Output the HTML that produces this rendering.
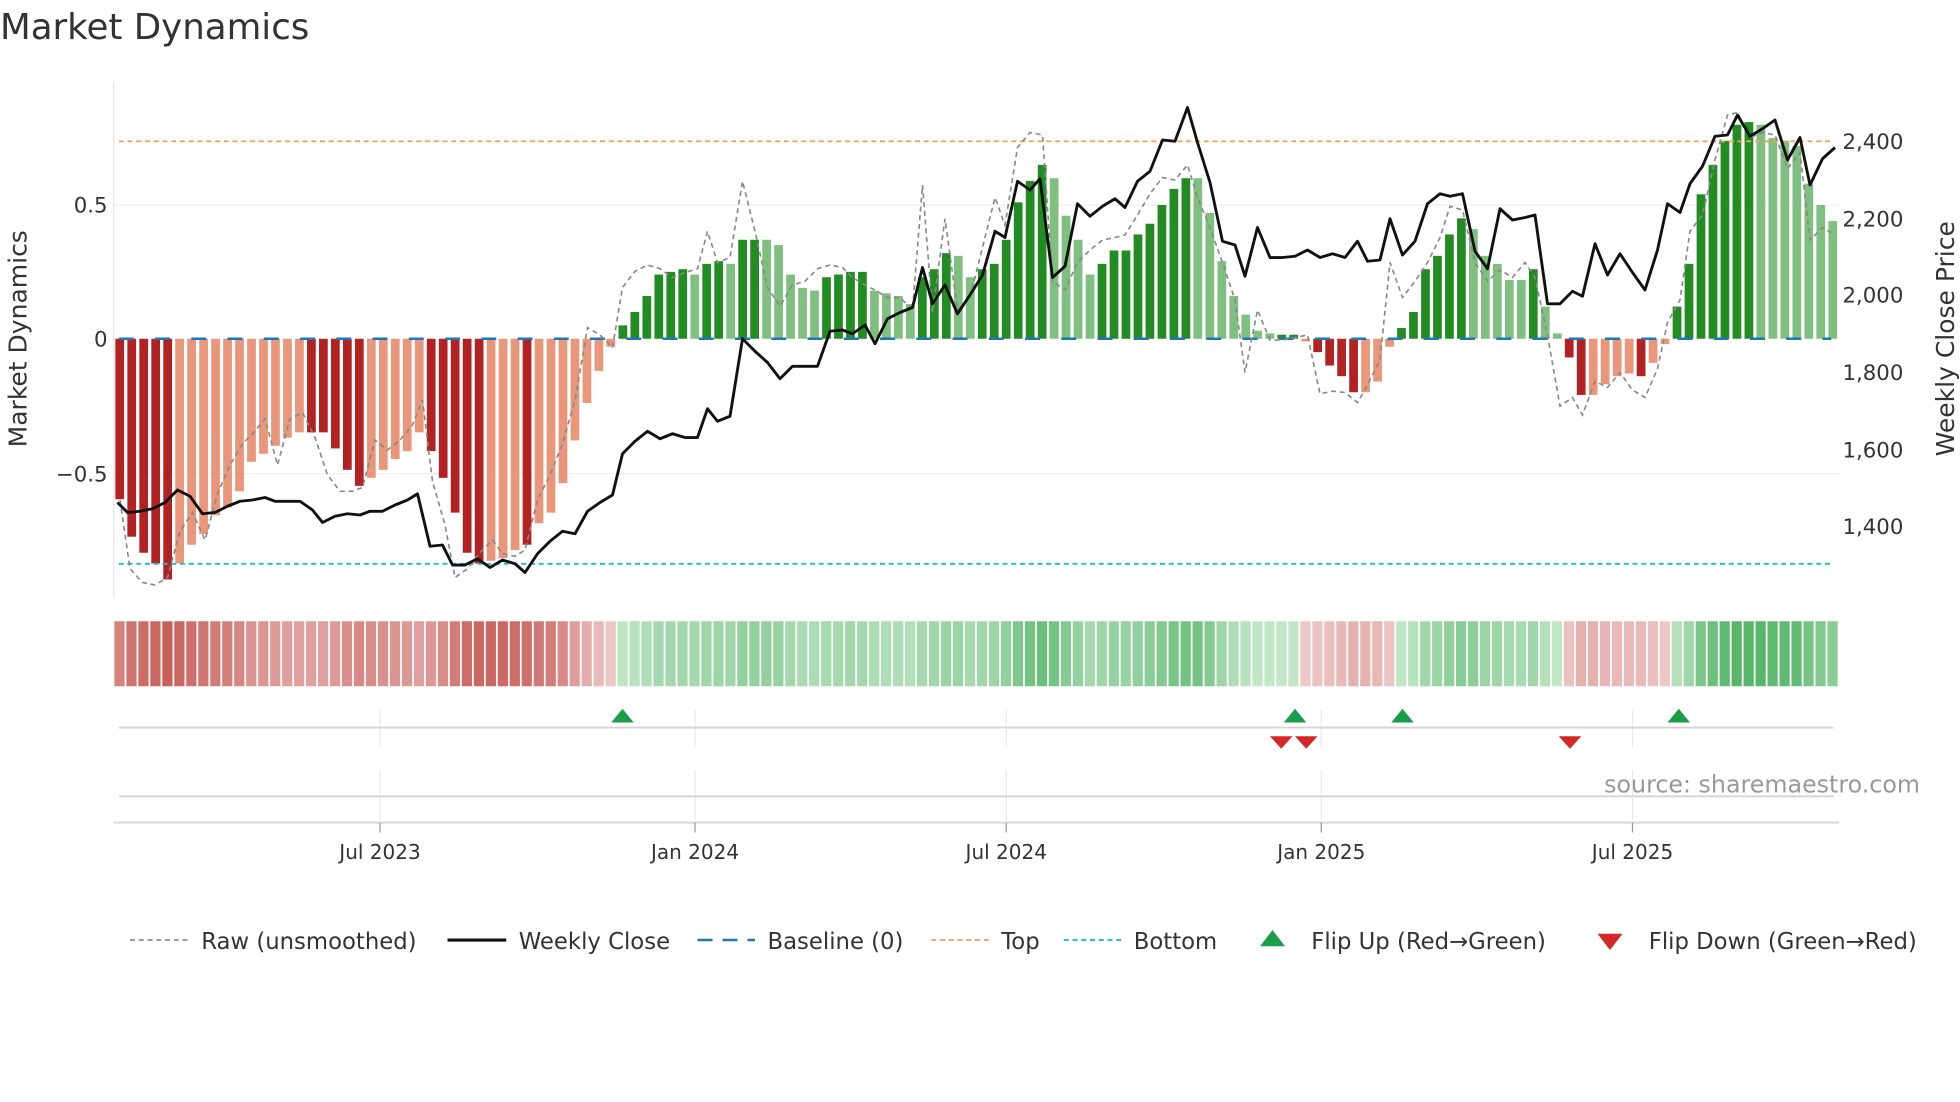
<!DOCTYPE html>
<html><head><meta charset="utf-8"><style>
html,body{margin:0;padding:0;background:#fff;width:1960px;height:1102px;overflow:hidden}
svg{display:block}
text{font-family:"DejaVu Sans","Liberation Sans",sans-serif;fill:#333}
</style></head><body>
<svg id="s" width="1960" height="1102" viewBox="0 0 1568 881.6" xmlns="http://www.w3.org/2000/svg">
<text x="0" y="31" font-size="28.5">Market Dynamics</text>
<line x1="91" y1="65" x2="91" y2="478" stroke="#e6e6e6" stroke-width="1"/>
<line x1="91" y1="164" x2="1471" y2="164" stroke="#efefef"/>
<line x1="91" y1="379" x2="1471" y2="379" stroke="#efefef"/>
<g font-size="17" text-anchor="end">
<text x="86" y="170">0.5</text><text x="86" y="277">0</text><text x="86" y="385">−0.5</text>
</g>
<g font-size="17">
<text x="1474" y="119">2,400</text><text x="1474" y="181">2,200</text><text x="1474" y="242">2,000</text>
<text x="1474" y="304">1,800</text><text x="1474" y="366">1,600</text><text x="1474" y="427">1,400</text>
</g>
<text transform="translate(21,271) rotate(-90)" font-size="20" text-anchor="middle">Market Dynamics</text>
<text transform="translate(1563,271) rotate(-90)" font-size="20" text-anchor="middle">Weekly Close Price</text>
<g id="bars"></g>
<line x1="95" y1="271" x2="1465" y2="271" stroke="#1f77b4" stroke-width="2" stroke-dasharray="12,17"/>
<line x1="95" y1="113" x2="1465" y2="113" stroke="#f0a460" stroke-width="1.5" stroke-dasharray="4,3"/>
<line x1="95" y1="451" x2="1465" y2="451" stroke="#17becf" stroke-width="1.5" stroke-dasharray="4,3"/>
<polyline id="raw" fill="none" stroke="#888" stroke-width="1.3" stroke-dasharray="4,3"/>
<polyline id="close" fill="none" stroke="#111" stroke-width="2.3" stroke-linejoin="round"/>
<g id="heat"></g>
<g stroke="#e8e8e8">
<line x1="304" y1="568" x2="304" y2="598"/><line x1="556" y1="568" x2="556" y2="598"/><line x1="805" y1="568" x2="805" y2="598"/><line x1="1057" y1="568" x2="1057" y2="598"/><line x1="1306" y1="568" x2="1306" y2="598"/>
<line x1="304" y1="616" x2="304" y2="656"/><line x1="556" y1="616" x2="556" y2="656"/><line x1="805" y1="616" x2="805" y2="656"/><line x1="1057" y1="616" x2="1057" y2="656"/><line x1="1306" y1="616" x2="1306" y2="656"/>
</g>
<line x1="95" y1="582" x2="1467" y2="582" stroke="#d4d4d4" stroke-width="1.5"/>
<line x1="95" y1="637" x2="1467" y2="637" stroke="#d4d4d4" stroke-width="1.5"/>
<line x1="91" y1="658" x2="1471" y2="658" stroke="#d4d4d4" stroke-width="1.5"/>
<g stroke="#999"><line x1="304" y1="658" x2="304" y2="666"/><line x1="556" y1="658" x2="556" y2="666"/><line x1="805" y1="658" x2="805" y2="666"/><line x1="1057" y1="658" x2="1057" y2="666"/><line x1="1306" y1="658" x2="1306" y2="666"/></g>
<g fill="#1a9e4a"><path d="M489,578 L498,567 L507,578Z"/><path d="M1027,578 L1036,567 L1045,578Z"/><path d="M1113,578 L1122,567 L1131,578Z"/><path d="M1334,578 L1343,567 L1352,578Z"/></g>
<g fill="#d62728"><path d="M1016,589 L1034,589 L1025,599Z"/><path d="M1036,589 L1054,589 L1045,599Z"/><path d="M1247,589 L1265,589 L1256,599Z"/></g>
<text x="1536" y="634" font-size="19" text-anchor="end" style="fill:#999">source: sharemaestro.com</text>
<g font-size="16" text-anchor="middle">
<text x="304" y="687">Jul 2023</text><text x="556" y="687">Jan 2024</text><text x="805" y="687">Jul 2024</text><text x="1057" y="687">Jan 2025</text><text x="1306" y="687">Jul 2025</text>
</g>
<g font-size="18.2">
<line x1="104" y1="752" x2="150" y2="752" stroke="#888" stroke-width="1.3" stroke-dasharray="4,3"/>
<text x="161" y="759">Raw (unsmoothed)</text>
<line x1="358" y1="752" x2="405" y2="752" stroke="#111" stroke-width="2.5"/>
<text x="415" y="759">Weekly Close</text>
<line x1="558" y1="752" x2="604" y2="752" stroke="#1f77b4" stroke-width="2" stroke-dasharray="12,8"/>
<text x="614" y="759">Baseline (0)</text>
<line x1="745" y1="752" x2="791" y2="752" stroke="#f0a460" stroke-width="1.5" stroke-dasharray="4,3"/>
<text x="801" y="759">Top</text>
<line x1="851" y1="752" x2="897" y2="752" stroke="#17becf" stroke-width="1.5" stroke-dasharray="4,3"/>
<text x="907" y="759">Bottom</text>
<path d="M1008,757 L1018,744 L1028,757Z" fill="#1a9e4a"/>
<text x="1049" y="759">Flip Up (Red→Green)</text>
<path d="M1278,747 L1298,747 L1288,760Z" fill="#d62728"/>
<text x="1319" y="759">Flip Down (Green→Red)</text>
</g>
</svg>
<script>
(function(){
var v=[[-0.60,1],[-0.74,1],[-0.80,1],[-0.84,1],[-0.90,1],[-0.84,0],[-0.77,0],[-0.73,0],[-0.66,0],[-0.63,0],[-0.57,0],[-0.46,0],[-0.43,0],[-0.40,0],[-0.37,0],[-0.35,0],[-0.35,1],[-0.35,1],[-0.41,1],[-0.49,1],[-0.55,1],[-0.52,0],[-0.49,0],[-0.45,0],[-0.42,0],[-0.35,0],[-0.42,1],[-0.52,1],[-0.65,1],[-0.80,1],[-0.84,1],[-0.83,0],[-0.82,0],[-0.79,0],[-0.77,1],[-0.69,0],[-0.65,0],[-0.54,0],[-0.38,0],[-0.24,0],[-0.12,0],[-0.03,0],
[0.05,1],[0.10,1],[0.16,1],[0.24,1],[0.25,1],[0.26,1],[0.24,0],[0.28,1],[0.29,1],[0.28,0],[0.37,1],[0.37,1],[0.37,0],[0.35,0],[0.24,0],[0.19,0],[0.18,0],[0.23,1],[0.24,1],[0.25,1],[0.25,1],[0.18,0],[0.17,0],[0.16,0],[0.13,0],[0.23,1],[0.26,1],[0.32,1],[0.31,0],[0.23,0],[0.26,1],[0.28,1],[0.37,1],[0.51,1],[0.59,1],[0.65,1],[0.60,0],[0.46,0],[0.37,0],[0.24,0],[0.28,1],[0.33,1],[0.33,1],[0.39,1],[0.43,1],[0.50,1],[0.56,1],[0.60,1],[0.60,0],[0.47,0],[0.29,0],[0.16,0],[0.09,0],[0.03,0],[0.02,0],[0.015,1],[0.015,1],
[-0.01,0],[-0.05,1],[-0.10,1],[-0.14,1],[-0.20,1],[-0.20,0],[-0.16,0],[-0.03,0],
[0.04,1],[0.10,1],[0.26,1],[0.31,1],[0.39,1],[0.45,1],[0.41,0],[0.31,0],[0.28,0],[0.22,0],[0.22,0],[0.26,1],[0.12,0],[0.02,0],
[-0.07,1],[-0.21,1],[-0.21,0],[-0.17,0],[-0.14,0],[-0.13,0],[-0.14,1],[-0.09,0],[-0.02,0],
[0.12,1],[0.28,1],[0.54,1],[0.65,1],[0.74,1],[0.80,1],[0.81,1],[0.80,0],[0.75,0],[0.74,0],[0.72,0],[0.58,0],[0.50,0],[0.44,0]];
var NS="http://www.w3.org/2000/svg",b=document.getElementById('bars'),h=document.getElementById('heat');
var n=v.length,x0=91,pitch=(1471-91)/n;
function el(t,a,p){var e=document.createElementNS(NS,t);for(var k in a)e.setAttribute(k,a[k]);p.appendChild(e);}
for(var i=0;i<n;i++){var val=v[i][0],d=v[i][1],x=x0+i*pitch;
var yy=271-val*214,ytop=Math.min(yy,271),hh=Math.abs(271-yy);
var c=val<0?(d?'#b22222':'#e9967a'):(d?'#228b22':'#7fbf7f');
el('rect',{x:x+1.3,y:ytop,width:pitch-2.6,height:Math.max(hh,0.8),fill:c},b);
var a=Math.min(Math.abs(val)/0.9,1);var col,t;
if(val<0){t=0.15+0.85*a;col='rgb('+Math.round(244-44*t)+','+Math.round(220-124*t)+','+Math.round(220-130*t)+')';}
else{t=0.1+0.9*a;col='rgb('+Math.round(208-132*t)+','+Math.round(238-62*t)+','+Math.round(212-117*t)+')';}
el('rect',{x:x+0.5,y:497,width:pitch-1.4,height:52,fill:col},h);}
document.getElementById('close').setAttribute('points',"94,402 102,410 112,409 122,407 132,402 142,392 152,397 162,411 172,410 182,405 192,401 202,400 212,398 220,401 230,401 240,401 250,408 258,418 268,413 278,411 288,412 296,409 306,409 316,404 326,400 334,395 344,437 354,436 362,452 372,452 382,447 392,454 402,448 412,451 420,458 430,443 440,433 450,425 460,427 470,409 480,402 490,396 498,363 508,353 518,345 528,351 538,347 548,350 558,350 566,327 574,337 584,333 594,271 604,281 614,290 624,303 634,293 644,293 654,293 664,265 674,264 682,267 692,260 700,275 710,255 720,250 730,246 738,214 746,243 756,228 766,251 776,236 786,220 796,185 804,190 814,145 824,152 832,143 842,222 852,213 862,163 872,173 882,165 892,159 900,166 910,145 920,137 930,112 940,113 950,86 958,114 968,146 978,193 988,196 996,221 1006,182 1016,206 1026,206 1036,205 1046,200 1056,206 1066,203 1076,206 1086,193 1094,209 1104,208 1112,175 1122,204 1132,193 1142,163 1152,155 1160,157 1170,155 1180,201 1190,215 1200,167 1210,176 1220,174 1228,172 1238,243 1248,243 1258,233 1266,237 1276,195 1286,220 1296,203 1306,218 1316,232 1326,200 1334,163 1344,170 1352,147 1362,133 1372,109 1382,108 1390,92 1400,109 1410,103 1420,96 1430,128 1440,110 1448,148 1458,127 1468,118");
document.getElementById('raw').setAttribute('points',"96,400 104,455 114,466 124,468 134,462 144,425 154,410 164,432 174,395 184,372 194,355 204,345 212,335 222,372 232,335 242,330 252,350 262,380 272,393 282,393 290,390 300,352 310,360 320,352 330,340 338,320 346,385 356,420 364,462 374,455 384,442 394,432 402,443 412,445 420,440 430,400 440,380 450,355 460,320 470,262 480,268 490,278 498,230 508,217 518,212 528,215 538,222 548,218 558,215 566,185 574,210 584,206 594,145 604,185 614,230 624,245 634,228 644,225 654,215 664,212 674,214 682,222 692,228 700,232 710,238 720,238 730,248 738,148 746,250 756,175 766,248 776,238 786,198 796,158 804,180 814,118 824,106 834,108 842,225 852,232 862,210 872,200 882,192 892,190 900,188 910,172 920,155 930,142 940,144 950,132 958,158 968,182 978,210 988,240 996,298 1006,248 1016,272 1026,272 1036,270 1046,268 1056,315 1066,313 1076,314 1086,322 1094,308 1104,288 1112,210 1122,238 1132,225 1142,210 1152,190 1160,165 1170,168 1180,210 1190,225 1200,216 1210,222 1220,210 1228,222 1238,268 1248,325 1258,318 1266,332 1276,305 1286,310 1296,298 1306,312 1316,318 1326,295 1334,258 1344,240 1352,185 1362,172 1372,128 1382,92 1390,90 1400,110 1410,106 1420,108 1430,135 1440,122 1448,192 1458,182 1468,188");
})();
</script>
</body></html>
